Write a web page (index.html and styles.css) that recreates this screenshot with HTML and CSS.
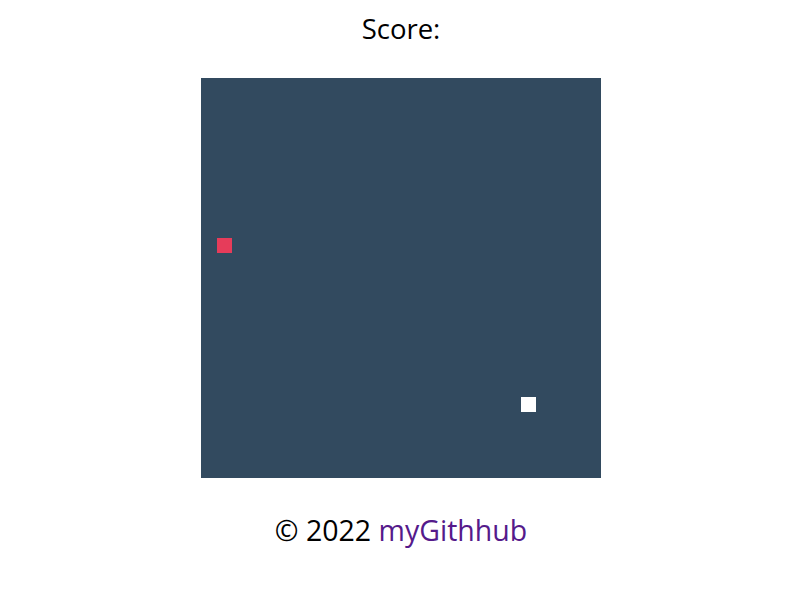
FILE: index.html
```html
<!DOCTYPE html>
<html>
<head>
<meta charset="utf-8">
<link rel="stylesheet" href="styles.css">
</head>
<body>
<div class="page">
  <div class="score">Score: <span class="score-value"></span></div>
  <div class="board">
    <div class="cell food" style="left:16px;top:160px"></div>
    <div class="cell snake" style="left:320px;top:319px"></div>
  </div>
  <div class="footer">© 2022 <a class="link" href="#">myGithhub</a></div>
</div>
</body>
</html>
```
FILE: styles.css
```css
html, body {
  margin: 0;
  padding: 0;
  background: #ffffff;
}
body {
  font-family: "Open Sans", "Noto Sans", sans-serif;
  color: #000;
}
.page {
  display: flex;
  flex-direction: column;
  align-items: center;
  padding-top: 12px;
}
.score {
  font-size: 27.5px;
  line-height: 34px;
  height: 34px;
  padding-left: 2px;
}
.board {
  position: relative;
  width: 400px;
  height: 400px;
  background: #324a5f;
  margin-top: 32px;
  margin-left: 2px;
}
.cell {
  position: absolute;
  width: 15px;
  height: 15px;
}
.food {
  background: #e63c5a;
}
.snake {
  background: #ffffff;
}
.footer {
  margin-top: 34px;
  font-size: 28.5px;
  line-height: 36px;
  padding-left: 2px;
}
.link {
  color: #551a8b;
  text-decoration: none;
}
```
